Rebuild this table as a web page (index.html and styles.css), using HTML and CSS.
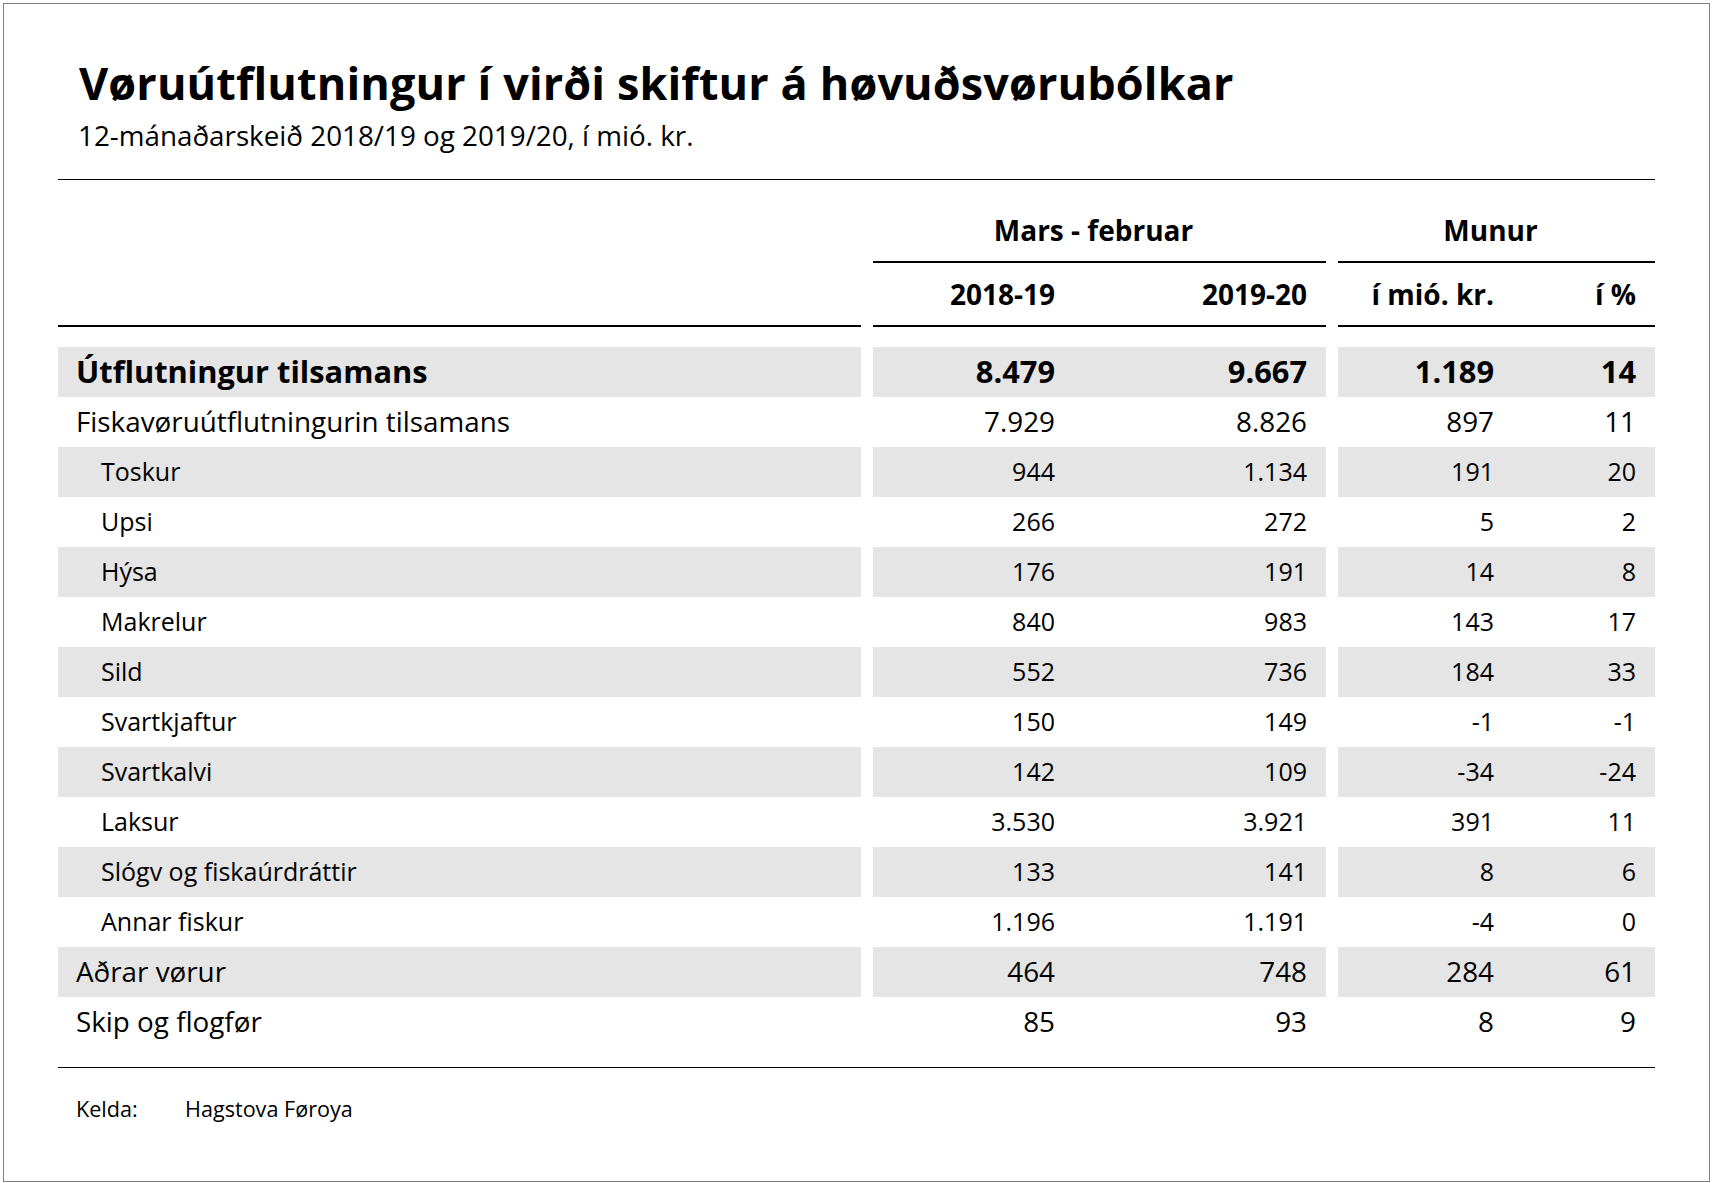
FILE: index.html
```html
<!DOCTYPE html>
<html lang="fo">
<head>
<meta charset="utf-8">
<title>Vøruútflutningur</title>
<link rel="stylesheet" href="styles.css">
</head>
<body>
<div class="frame">
  <h1 class="title">Vøruútflutningur í virði skiftur á høvuðsvørubólkar</h1>
  <p class="subtitle">12-mánaðarskeið 2018/19 og 2019/20, í mió. kr.</p>
  <div class="table">
    <div class="hrow head1">
      <div class="seg lab"></div>
      <div class="seg g1 grp">Mars - februar</div>
      <div class="seg g2 grp">Munur</div>
    </div>
    <div class="hrow head2">
      <div class="seg lab"></div>
      <div class="seg g1"><span class="c ca">2018-19</span><span class="c cb">2019-20</span></div>
      <div class="seg g2"><span class="c cc">í mió. kr.</span><span class="c cd">í %</span></div>
    </div>
    <div class="body">
      <div class="row total shade">
        <div class="seg lab">Útflutningur tilsamans</div>
        <div class="seg g1"><span class="c ca">8.479</span><span class="c cb">9.667</span></div>
        <div class="seg g2"><span class="c cc">1.189</span><span class="c cd">14</span></div>
      </div>
      <div class="row l1">
        <div class="seg lab">Fiskavøruútflutningurin tilsamans</div>
        <div class="seg g1"><span class="c ca">7.929</span><span class="c cb">8.826</span></div>
        <div class="seg g2"><span class="c cc">897</span><span class="c cd">11</span></div>
      </div>
      <div class="row sub shade">
        <div class="seg lab">Toskur</div>
        <div class="seg g1"><span class="c ca">944</span><span class="c cb">1.134</span></div>
        <div class="seg g2"><span class="c cc">191</span><span class="c cd">20</span></div>
      </div>
      <div class="row sub">
        <div class="seg lab">Upsi</div>
        <div class="seg g1"><span class="c ca">266</span><span class="c cb">272</span></div>
        <div class="seg g2"><span class="c cc">5</span><span class="c cd">2</span></div>
      </div>
      <div class="row sub shade">
        <div class="seg lab">Hýsa</div>
        <div class="seg g1"><span class="c ca">176</span><span class="c cb">191</span></div>
        <div class="seg g2"><span class="c cc">14</span><span class="c cd">8</span></div>
      </div>
      <div class="row sub">
        <div class="seg lab">Makrelur</div>
        <div class="seg g1"><span class="c ca">840</span><span class="c cb">983</span></div>
        <div class="seg g2"><span class="c cc">143</span><span class="c cd">17</span></div>
      </div>
      <div class="row sub shade">
        <div class="seg lab">Sild</div>
        <div class="seg g1"><span class="c ca">552</span><span class="c cb">736</span></div>
        <div class="seg g2"><span class="c cc">184</span><span class="c cd">33</span></div>
      </div>
      <div class="row sub">
        <div class="seg lab">Svartkjaftur</div>
        <div class="seg g1"><span class="c ca">150</span><span class="c cb">149</span></div>
        <div class="seg g2"><span class="c cc">-1</span><span class="c cd">-1</span></div>
      </div>
      <div class="row sub shade">
        <div class="seg lab">Svartkalvi</div>
        <div class="seg g1"><span class="c ca">142</span><span class="c cb">109</span></div>
        <div class="seg g2"><span class="c cc">-34</span><span class="c cd">-24</span></div>
      </div>
      <div class="row sub">
        <div class="seg lab">Laksur</div>
        <div class="seg g1"><span class="c ca">3.530</span><span class="c cb">3.921</span></div>
        <div class="seg g2"><span class="c cc">391</span><span class="c cd">11</span></div>
      </div>
      <div class="row sub shade">
        <div class="seg lab">Slógv og fiskaúrdráttir</div>
        <div class="seg g1"><span class="c ca">133</span><span class="c cb">141</span></div>
        <div class="seg g2"><span class="c cc">8</span><span class="c cd">6</span></div>
      </div>
      <div class="row sub">
        <div class="seg lab">Annar fiskur</div>
        <div class="seg g1"><span class="c ca">1.196</span><span class="c cb">1.191</span></div>
        <div class="seg g2"><span class="c cc">-4</span><span class="c cd">0</span></div>
      </div>
      <div class="row l1 shade">
        <div class="seg lab">Aðrar vørur</div>
        <div class="seg g1"><span class="c ca">464</span><span class="c cb">748</span></div>
        <div class="seg g2"><span class="c cc">284</span><span class="c cd">61</span></div>
      </div>
      <div class="row l1">
        <div class="seg lab">Skip og flogfør</div>
        <div class="seg g1"><span class="c ca">85</span><span class="c cb">93</span></div>
        <div class="seg g2"><span class="c cc">8</span><span class="c cd">9</span></div>
      </div>
    </div>
    <div class="table-end"></div>
  </div>
  <div class="source"><span class="src-label">Kelda:</span><span class="src-value">Hagstova Føroya</span></div>
</div>
</body>
</html>
```

FILE: styles.css
```css
html, body {
  margin: 0;
  padding: 0;
  background: #ffffff;
}

.frame {
  box-sizing: border-box;
  width: 1707px;
  height: 1179px;
  margin: 3px 0 0 3px;
  border: 1px solid #7f7f7f;
  padding: 52px 54px 0 54px;
  font-family: "Open Sans", "Noto Sans", sans-serif;
  color: #000000;
  background: #ffffff;
}

.title {
  margin: 0 0 0 21px;
  font-size: 45px;
  font-weight: 700;
  line-height: 54px;
  letter-spacing: 0.12px;
}

.subtitle {
  margin: 7px 0 0 20px;
  font-size: 27.8px;
  font-weight: 400;
  line-height: 36px;
}

.table {
  margin-top: 26px;
  border-top: 1px solid #000000;
}

.hrow,
.row {
  display: flex;
  gap: 12px;
}

.seg {
  box-sizing: border-box;
  flex: none;
}

.lab {
  width: 803px;
}

.g1 {
  width: 453px;
  display: flex;
}

.g2 {
  width: 317px;
  display: flex;
}

.c {
  box-sizing: border-box;
  display: block;
  text-align: right;
  padding-right: 19px;
}

.ca { width: 201px; }
.cb { width: 252px; }
.cc { width: 175px; }
.cd { width: 142px; }

.head1 .seg,
.head2 .seg {
  font-size: 28px;
  font-weight: 700;
  line-height: 38px;
}

.head1 .seg {
  height: 83px;
  padding-top: 31px;
}

.head1 .grp {
  border-bottom: 2px solid #000000;
  justify-content: center;
  padding-right: 12px;
}

.head2 .seg {
  height: 64px;
  padding-top: 12px;
  border-bottom: 2px solid #000000;
}

.body {
  margin-top: 20px;
}

.row {
  height: 50px;
  line-height: 49px;
}

.row .seg {
  height: 50px;
  white-space: nowrap;
}

.row.shade .seg {
  background: #e5e5e5;
}

.row .lab {
  padding-left: 18px;
}

.row.sub .lab {
  padding-left: 43px;
}

.row.total {
  font-size: 30.8px;
  font-weight: 700;
}

.row.l1 {
  font-size: 27.8px;
}

.row.sub {
  font-size: 25px;
}

.table-end {
  margin-top: 20px;
  border-top: 1px solid #000000;
}

.source {
  margin-top: 27px;
  padding-left: 18px;
  font-size: 21.6px;
  line-height: 27px;
}

.src-label {
  display: inline-block;
  width: 109px;
}
```
